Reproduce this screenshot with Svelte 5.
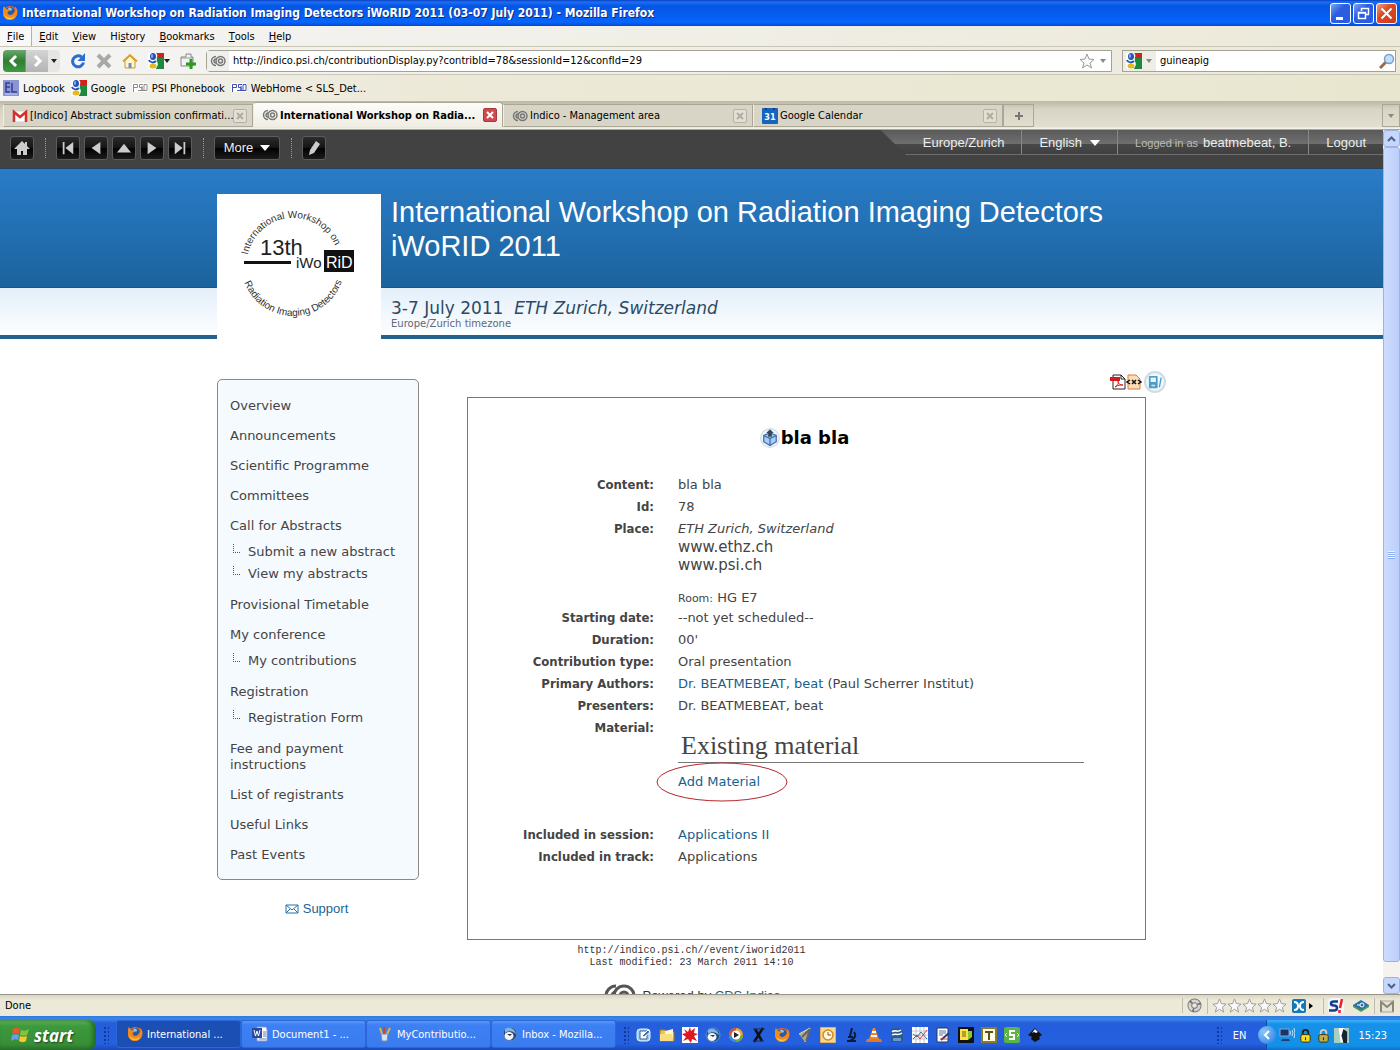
<script lang="ts">
	interface Tab {
		title: string;
		icon: string;
		active?: boolean;
	}

	interface MenuEntry {
		label: string;
		children?: string[];
	}

	const menus = ['File', 'Edit', 'View', 'History', 'Bookmarks', 'Tools', 'Help'];
	const accessKeys = [0, 0, 0, 2, 0, 0, 0];

	const bookmarks = [
		{ icon: 'el', label: 'Logbook' },
		{ icon: 'google', label: 'Google' },
		{ icon: 'psi', label: 'PSI Phonebook' },
		{ icon: 'psiblue', label: 'WebHome < SLS_Det...' }
	];

	const tabs: Tab[] = [
		{ title: '[Indico] Abstract submission confirmati...', icon: 'gmail' },
		{ title: 'International Workshop on Radia...', icon: 'indico', active: true },
		{ title: 'Indico - Management area', icon: 'indico' },
		{ title: 'Google Calendar', icon: 'calendar' }
	];

	const confMenu: MenuEntry[] = [
		{ label: 'Overview' },
		{ label: 'Announcements' },
		{ label: 'Scientific Programme' },
		{ label: 'Committees' },
		{ label: 'Call for Abstracts', children: ['Submit a new abstract', 'View my abstracts'] },
		{ label: 'Provisional Timetable' },
		{ label: 'My conference', children: ['My contributions'] },
		{ label: 'Registration', children: ['Registration Form'] },
		{ label: 'Fee and payment instructions' },
		{ label: 'List of registrants' },
		{ label: 'Useful Links' },
		{ label: 'Past Events' }
	];

	const tasks = [
		{ icon: 'firefox', label: 'International ...', active: true },
		{ icon: 'word', label: 'Document1 - ...' },
		{ icon: 'paint', label: 'MyContributio...' },
		{ icon: 'bird', label: 'Inbox - Mozilla...' }
	];

	const quickLaunch = [
		'desktop', 'folder', 'splat', 'bird', 'media', 'xwin', 'firefox', 'pens', 'clock',
		'scope', 'vlc', 'office', 'chart', 'edit', 'note', 'tbox', 'sbox', 'inkscape'
	];

	let address = $state('http://indico.psi.ch/contributionDisplay.py?contribId=78&sessionId=12&confId=29');
	let search = $state('guineapig');
</script>

{#snippet icon(name: string, size: number = 16)}
	<svg class="icon" width={size} height={size} viewBox="0 0 16 16" fill="none" aria-hidden="true">
		{#if name === 'firefox'}
			<circle cx="8" cy="8" r="7" fill="#e66a10" />
			<circle cx="8" cy="7" r="5" fill="#2b5ba8" />
			<path d="M6 3c2-1 4 0 4 2-1 1-2 0-3 1z" fill="#8fc4ee" />
			<path d="M1 4c0-2 1-3 1-3l2 3c2 0 3 1 4 2-2 0-3 1-2 3 2 2 5 1 7-3 1-2 0-4-1-5 5 3 4 9 1 12-4 4-11 2-12-4z" fill="#f08a1c" />
			<path d="M2 9c2 4 7 5 11 2-3 5-10 4-11-2z" fill="#fccb3c" />
		{:else if name === 'reload'}
			<path d="M13.500 9.500A5.500 5.500 0 1 1 11.500 4" stroke="#2a6fd0" stroke-width="3" />
			<path d="M15 0v8H7.500z" fill="#2a6fd0" />
		{:else if name === 'stop'}
			<path d="M2 2l12 12M14 2L2 14" stroke="#a9a9a9" stroke-width="4" />
		{:else if name === 'home'}
			<path d="M3 8v7h10V8L8 3z" fill="#fff6cc" stroke="#c79b3a" />
			<path d="M1 8.500L8 2l7 6.500" stroke="#e0a22e" stroke-width="2" />
			<path d="M6.500 10h3v5h-3z" fill="#6f8fc0" />
		{:else if name === 'google'}
			<path d="M8 0h8v5H8z" fill="#d2221d" />
			<path d="M9 5h7v11H8z" fill="#1b8a3c" />
			<path d="M0 0h8c3 3 0 5 0 7 3 3 2 7-1 9H0z" fill="#fff" />
			<ellipse cx="5" cy="3.500" rx="3" ry="3.500" fill="#2255b8" />
			<ellipse cx="4" cy="3" rx="1" ry="2" fill="#8eb1ee" />
			<path d="M1 7c1 3 5 3 7 1" stroke="#2255b8" stroke-width="2" />
			<ellipse cx="5" cy="13" rx="3.500" ry="2.500" fill="#e8b81c" />
		{:else if name === 'newtab'}
			<path d="M1 4h5V1h5v3h2v9H1z" fill="#f2f2f2" stroke="#888" />
			<path d="M1 5h12" stroke="#999" />
			<path d="M11 6v10M6 11h10" stroke="#2d9a20" stroke-width="3" />
		{:else if name === 'indico'}
			<g stroke="#777" stroke-width="1.500">
				<path d="M6 3.500a4.500 4.500 0 1 0 0 9" />
				<path d="M6 6a2 2 0 1 0 0 4" />
				<circle cx="10.500" cy="8" r="4.500" />
				<circle cx="10.500" cy="8" r="2" />
			</g>
		{:else if name === 'gmail'}
			<path d="M1 3h14v11H1z" fill="#fff" stroke="#cfcfcf" />
			<path d="M2 14V4l6 5 6-5v10" stroke="#d5302b" stroke-width="2.500" />
		{:else if name === 'calendar'}
			<rect width="16" height="16" rx="1" fill="#1763c0" />
			<path d="M3 1h2M11 1h2" stroke="#0b3c80" stroke-width="2" />
			<text x="8" y="12" font-size="9" font-weight="700" text-anchor="middle" fill="#fff">31</text>
		{:else if name === 'el'}
			<rect width="16" height="16" fill="#8b95d4" />
			<path d="M7 3H3v9h4M3 7h4M9 3v9h5" stroke="#323f91" stroke-width="1.500" />
			<path d="M2 14h12" stroke="#c6cbf0" />
		{:else if name === 'psi' || name === 'psiblue'}
			<rect y="3" width="16" height="9" fill="#fff" />
			<path d="M1.500 12V4.500h4v3h-4M11 4.500H7.500v3H10v3H6M10 6v4.500h5v-6h-3v6" stroke={name === 'psi' ? '#8a8a8a' : '#3c4fb4'} />
		{:else if name === 'star'}
			<path d="M8 1l2 5 5 .5-4 3.500 1.500 5L8 12l-4.500 3L5 10 1 6.500 6 6z" fill="#fafafa" stroke="#999" />
		{:else if name === 'magnifier'}
			<path d="M1 15l6-6" stroke="#9a6b4b" stroke-width="3" />
			<circle cx="10" cy="6" r="4.500" fill="#bfe0fa" stroke="#7c9cc4" stroke-width="1.500" />
		{:else if name === 'word'}
			<path d="M5 1h9l1 2v12H5z" fill="#fff" stroke="#8798c5" />
			<rect x="0" y="2" width="10" height="10" fill="#2a4b9b" />
			<path d="M2 4l1.500 6L5 5l1.500 5L8 4" stroke="#fff" />
			<path d="M11 6h3M11 8h3M11 10h3M7 13h7" stroke="#5f7fc0" />
		{:else if name === 'paint'}
			<path d="M5 15l-1-7h7l-1 7z" fill="#d9e3ef" stroke="#7d8ca4" />
			<path d="M5 8L3 2M10 8l3-6" stroke="#e3b33c" stroke-width="2" />
			<path d="M7 8V1" stroke="#d2452a" stroke-width="2" />
		{:else if name === 'bird'}
			<circle cx="8" cy="8" r="7" fill="#244b86" stroke="#5d8fce" />
			<path d="M3 3c5-3 10 0 11 5-3-3-7-4-11-1z" fill="#7fb2e8" />
			<ellipse cx="7" cy="10" rx="4.500" ry="4" fill="#f3f5f8" />
			<path d="M5 8h5l-2 2z" fill="#333" />
		{:else if name === 'desktop'}
			<rect x="1" y="2" width="13" height="12" rx="3" fill="#9fd0ef" stroke="#d9efff" />
			<path d="M4 4h7v8H4z" fill="#fff" stroke="#345f8f" />
			<path d="M6 9l6-6 2 2-6 5z" fill="#396aa8" stroke="#fff" />
		{:else if name === 'folder'}
			<path d="M1 3h5l2 2h7v9H1z" fill="#edc652" stroke="#a97b1c" />
			<path d="M6 4l8-2v9H6z" fill="#fff5cc" />
			<path d="M1 7h12l1 7H1z" fill="#f9dd7f" />
		{:else if name === 'splat'}
			<rect width="16" height="16" fill="#fff" />
			<path d="M8 0l1 4 4-3-1 5 4 1-4 2 3 5-5-2-1 4-3-4-5 2 3-4-4-3 4-1-2-4 4 3z" fill="#e01820" />
		{:else if name === 'media'}
			<circle cx="8" cy="8" r="7" fill="#f0a431" />
			<path d="M8 1a7 7 0 0 0-7 7h7z" fill="#df5030" />
			<path d="M1 8a7 7 0 0 0 7 7V8z" fill="#3e86d0" />
			<path d="M8 15a7 7 0 0 0 7-7H8z" fill="#6aac3c" />
			<circle cx="8" cy="8" r="4.500" fill="#fff" />
			<path d="M6 5l5 3-5 3z" fill="#252525" />
		{:else if name === 'xwin'}
			<path d="M4 2l7 12M12 1L3 15" stroke="#101010" stroke-width="2.500" />
			<path d="M2 2h12M2 14h11" stroke="#1c2c50" />
		{:else if name === 'pens'}
			<path d="M2 7l11-6-5 14" fill="#b5a67d" stroke="#e5dcb6" />
			<path d="M9 14l4-12M5 10l8-8" stroke="#606469" stroke-width="2" />
		{:else if name === 'clock'}
			<rect width="16" height="16" rx="1" fill="#f7d891" stroke="#cf8c35" />
			<circle cx="8" cy="8" r="5" fill="#fff7d9" stroke="#d28823" stroke-width="1.500" />
			<path d="M8 5v3h3" stroke="#8a4f12" />
		{:else if name === 'scope'}
			<path d="M9 1L7 9M11 5c3 4 0 7-4 9M4 14h9M5 10h5" stroke="#091939" stroke-width="2" />
		{:else if name === 'vlc'}
			<path d="M7 1h2l4 11H3z" fill="#ee8625" />
			<path d="M6 5h4M5 9h6" stroke="#fff" stroke-width="2" />
			<path d="M1 12h14l1 3H0z" fill="#e8771c" />
		{:else if name === 'office'}
			<path d="M2 1h9l3 3v11H2z" fill="#2a5a93" />
			<path d="M3 5c3-3 5 1 9-2M3 8c3-2 6 1 10-2" stroke="#fff" stroke-width="1.500" />
			<path d="M4 11h8v3H4z" fill="#6b9ac9" />
		{:else if name === 'chart'}
			<rect width="16" height="16" fill="#fff" />
			<path d="M0 4h16M0 8h16M0 12h16M4 0v16M8 0v16M12 0v16" stroke="#c6c6c6" />
			<path d="M1 12l4-4 3 4 7-9" stroke="#c8383c" />
			<path d="M1 7l4 3 4-5 6 7" stroke="#3e6aae" />
		{:else if name === 'edit'}
			<path d="M2 1h11v14H2z" fill="#fff" stroke="#29395e" />
			<path d="M4 4h7M4 6h7M4 8h4" stroke="#57759f" />
			<path d="M6 13l8-7" stroke="#223e6d" stroke-width="2" />
			<path d="M5 12h8" stroke="#cf4337" />
		{:else if name === 'note'}
			<rect width="16" height="16" fill="#111" />
			<path d="M2 2h8v11H2z" fill="#ffe04b" />
			<path d="M4 5h4M4 7h4M4 9h4" stroke="#705a00" />
			<path d="M10 4h4v6l-4 3z" fill="#85c927" />
		{:else if name === 'tbox'}
			<rect width="16" height="16" fill="#8a7a2c" />
			<rect x="2" y="2" width="12" height="12" fill="#fffbe2" />
			<path d="M4 5h8M8 5v8" stroke="#5c5018" stroke-width="2" />
		{:else if name === 'sbox'}
			<rect width="16" height="16" rx="2" fill="#5cb346" />
			<path d="M11 4H6v4h4v4H5" stroke="#fff" stroke-width="2" />
			<path d="M3 6L1 8l2 2M13 6l2 2-2 2" stroke="#dff2d8" />
		{:else if name === 'inkscape'}
			<path d="M8 1l7 7-3 2 1 2-5 3-4-3 1-2-4-2z" fill="#101010" />
			<path d="M8 2l3 3-2 1-2-1-2 1z" fill="#f4f4f4" />
		{:else if name === 'recycle'}
			<circle cx="8" cy="8" r="5" stroke="#777" stroke-width="5" />
			<circle cx="8" cy="8" r="5" stroke="#d4d4d4" stroke-width="3" stroke-dasharray="8 2" />
		{:else if name === 'xmarks'}
			<rect x="1" y="1" width="14" height="14" rx="2" fill="#1577b5" />
			<path d="M3 4c3 0 4 2 4 4s-1 4-4 4M13 4c-3 0-4 2-4 4s1 4 4 4" stroke="#fff" stroke-width="2" />
			<path d="M6 8h4" stroke="#fff" stroke-width="2" />
		{:else if name === 'snag'}
			<rect width="16" height="16" rx="4" fill="#f3f6fa" />
			<path d="M10 3.500H6c-4 0-4 4 0 4s4 5 0 5H1" stroke="#183d8c" stroke-width="2.500" />
			<path d="M14 1l-2 9M11.500 12v3" stroke="#e22" stroke-width="2.500" />
		{:else if name === 'diamond'}
			<path d="M0 9l8 5 8-5V7H0z" fill="#4f9a54" />
			<path d="M8 2l8 5-8 5-8-5z" fill="#2c70a8" />
			<circle cx="9" cy="7" r="2" stroke="#fff" />
			<path d="M4 7h3" stroke="#fff" />
		{:else if name === 'mail'}
			<path d="M1 3h14v11H1z" fill="#e5e2d6" />
			<path d="M2 14V4l6 5 6-5v10" stroke="#8a8776" stroke-width="2" />
			<path d="M1 3h14M1 14h14" stroke="#aaa795" />
		{:else if name === 'network'}
			<rect x="1" y="2" width="9" height="7" fill="#17356e" stroke="#8da5c6" />
			<path d="M3 12h7l1 2H2z" fill="#253d68" />
			<path d="M11 4q1 2 0 4M13 3q2 3 0 6M15 1q2 5 0 10" stroke="#bde2ff" />
		{:else if name === 'key' || name === 'lock'}
			<path d="M5 8V5a3 3 0 0 1 6 0v3" stroke={name === 'key' ? '#222' : '#ccc'} stroke-width="2" />
			<rect x="3" y="7" width="10" height="8" rx="2" fill={name === 'key' ? '#f3da24' : '#c4ac44'} stroke="#39320b" />
			<path d="M8 10v3" stroke="#221d06" />
		{:else if name === 'cat'}
			<rect width="16" height="16" fill="#a9cfbf" />
			<path d="M5 0h6v8l4 7H7z" fill="#fff" />
			<path d="M10 1l4 3v12h-4L8 8z" fill="#152332" />
		{:else if name === 'pdf'}
			<path d="M3 1h8l4 4v10H3z" fill="#fff" stroke="#222" />
			<path d="M11 1v4h4" stroke="#222" />
			<path d="M0 3h10v4H0z" fill="#d21c1c" />
			<path d="M5 13c3-2 4-4 3-6 0 3 2 4 5 4-3 0-5 0-8 2z" stroke="#d22" />
		{:else if name === 'xml'}
			<path d="M2 1h8l4 4v10H2z" fill="#fcdcb9" stroke="#e07b38" />
			<path d="M4 6L1 8l3 2M12 6l3 2-3 2" stroke="#111" stroke-width="1.500" />
			<path d="M6 6l4 4M10 6l-4 4" stroke="#111" stroke-width="1.500" />
		{:else if name === 'pda'}
			<rect x="1" y="1" width="10" height="14" rx="1" fill="#4e9dc9" />
			<path d="M3 3h6v5H3z" fill="#e9f5fc" />
			<path d="M4 11h4v2H4z" fill="#c4e1f0" />
			<path d="M15 3l-2 11" stroke="#4e9dc9" stroke-width="1.500" />
		{:else if name === 'box'}
			<circle cx="8" cy="8" r="7.500" fill="#eef4f9" stroke="#d4dee7" />
			<path d="M8 4l5 2v5l-5 3-5-3V6z" fill="#a9cdf0" stroke="#3e6da8" />
			<path d="M3 6l5 2.500L13 6M8 8.500V14" stroke="#3e6da8" />
			<path d="M8 1l3 3H9.500v3h-3V4H5z" fill="#34495f" />
		{:else if name === 'envelope'}
			<path d="M2 4h12v8H2zM2 4l6 5 6-5M2 12l4-4M14 12l-4-4" stroke="#2573a7" />
		{:else if name === 'house'}
			<path d="M8 1L0 9h3v6h4v-4h2v4h4V9h3l-3-3V2h-2v2z" fill="#ccc" />
		{:else if name === 'first'}
			<path d="M2 1h2v14H2zM14 1v14L5 8z" fill="#ccc" />
		{:else if name === 'prev'}
			<path d="M13 1v14L3 8z" fill="#ccc" />
		{:else if name === 'up'}
			<path d="M8 3l8 10H0z" fill="#ccc" />
		{:else if name === 'next'}
			<path d="M3 1v14l10-7z" fill="#ccc" />
		{:else if name === 'last'}
			<path d="M12 1h2v14h-2zM2 1v14l9-7z" fill="#ccc" />
		{:else if name === 'pencil'}
			<path d="M3 15l1-5 6-9 4 3-6 9z" fill="#ccc" />
		{/if}
	</svg>
{/snippet}

<div class="desktop">
	<header class="title-bar">
		{@render icon('firefox')}
		<span class="window-title"
			>International Workshop on Radiation Imaging Detectors iWoRID 2011 (03-07 July 2011) - Mozilla
			Firefox</span
		>
		<button class="win-button" aria-label="Minimize">
			<svg width="19" height="19" viewBox="0 0 19 19"><path d="M5 13h7v3H5z" fill="#fff" /></svg>
		</button>
		<button class="win-button" aria-label="Restore">
			<svg width="19" height="19" viewBox="0 0 19 19" fill="none" stroke="#fff">
				<path d="M7.500 7V4.500h7v6H12" stroke-width="1.500" />
				<path d="M4.500 8.500h7v6h-7zM4 9h8" stroke-width="1.500" />
			</svg>
		</button>
		<button class="win-button close" aria-label="Close">
			<svg width="19" height="19" viewBox="0 0 19 19" stroke="#fff" stroke-width="2">
				<path d="M4.500 4.500l10 10M14.500 4.500l-10 10" />
			</svg>
		</button>
	</header>

	<nav class="menu-bar">
		{#each menus as menu, i}
			{@const k = accessKeys[i]}
			<button class:first={i === 0}>{menu.slice(0, k)}<u>{menu[k]}</u>{menu.slice(k + 1)}</button>
		{/each}
	</nav>

	<div class="nav-bar">
		<div class="history-buttons">
			<button class="back" aria-label="Back">
				<svg width="22" height="22" viewBox="0 0 22 22" fill="none" stroke="#fff" stroke-width="3"><path d="M13 6l-5 5 5 5" /></svg>
			</button>
			<button class="forward" aria-label="Forward">
				<svg width="22" height="22" viewBox="0 0 22 22" fill="none" stroke="#fff" stroke-width="3"><path d="M9 6l5 5-5 5" /></svg>
			</button>
			<button class="history-drop" aria-label="Recent pages"><span class="arrow"></span></button>
		</div>
		<button aria-label="Reload">{@render icon('reload')}</button>
		<button aria-label="Stop">{@render icon('stop')}</button>
		<button aria-label="Home">{@render icon('home')}</button>
		<button aria-label="Google">{@render icon('google')}<span class="arrow"></span></button>
		<button aria-label="New tab">{@render icon('newtab')}</button>
		<div class="field address">
			<span class="identity">{@render icon('indico')}</span>
			<input type="text" aria-label="Location" bind:value={address} />
			<button aria-label="Bookmark this page">{@render icon('star')}</button>
			<button class="address-drop" aria-label="Show history"><span class="arrow grey"></span></button>
		</div>
		<div class="field search">
			<button class="engine" aria-label="Search engine">{@render icon('google')}<span class="arrow grey"></span></button>
			<input type="text" aria-label="Search" bind:value={search} />
			<button aria-label="Go">{@render icon('magnifier')}</button>
		</div>
	</div>

	<nav class="bookmark-bar">
		{#each bookmarks as bookmark}
			<a href="#{bookmark.label}">{@render icon(bookmark.icon)}{bookmark.label}</a>
		{/each}
	</nav>

	<div class="tab-bar">
		{#each tabs as tab}
			<div class="tab" class:active={tab.active}>
				{@render icon(tab.icon)}
				<span class="tab-title">{tab.title}</span>
				<button class="tab-close" aria-label="Close tab">
					<svg width="8" height="8" viewBox="0 0 8 8"><path d="M1 1l6 6M7 1L1 7" stroke="currentColor" stroke-width="2" /></svg>
				</button>
			</div>
		{/each}
		<button class="new-tab" aria-label="Open a new tab">
			<svg width="10" height="10" viewBox="0 0 10 10"><path d="M5 1v8M1 5h8" stroke="#777" stroke-width="2" /></svg>
		</button>
		<button class="all-tabs" aria-label="List all tabs"><span class="arrow grey"></span></button>
	</div>

	<div class="viewport">
		<div class="page">
			<div class="session-bar">
				<div class="session-tools">
					<button class="dark" aria-label="Home">{@render icon('house')}</button>
					<span class="dots"></span>
					<div class="pager">
						<button class="dark" aria-label="First">{@render icon('first', 14)}</button>
						<button class="dark" aria-label="Previous">{@render icon('prev', 14)}</button>
						<button class="dark" aria-label="Up">{@render icon('up', 14)}</button>
						<button class="dark" aria-label="Next">{@render icon('next', 14)}</button>
						<button class="dark" aria-label="Last">{@render icon('last', 14)}</button>
					</div>
					<span class="dots"></span>
					<button class="dark more">More <span class="caret"></span></button>
					<span class="dots"></span>
					<button class="dark" aria-label="Edit">{@render icon('pencil')}</button>
				</div>
				<div class="session-user">
					<a href="#timezone" class="zone">Europe/Zurich</a>
					<a href="#language">English <span class="caret"></span></a>
					<span class="user"><small>Logged in as</small> beatmebeat, B.</span>
					<a href="#logout">Logout</a>
				</div>
			</div>

			<header class="conf-header">
				<div class="container header-grid">
					<svg class="logo" width="164" height="145" viewBox="0 0 164 145" role="img" aria-label="13th iWoRiD">
						<defs>
							<path id="arc-top" d="M30 70A46 46 0 0 1 122 70" />
							<path id="arc-bottom" d="M24 70A52 52 0 0 0 128 70" />
						</defs>
						<rect width="164" height="145" fill="#fff" />
						<text font-size="10" fill="#333"><textPath href="#arc-top" startOffset="9">International Workshop on</textPath></text>
						<text font-size="10" fill="#333"><textPath href="#arc-bottom" startOffset="19">Radiation Imaging Detectors</textPath></text>
						<text x="43" y="61" font-size="22" fill="#222">13th</text>
						<rect x="27" y="67" width="47" height="3" fill="#111" />
						<text x="79" y="74" font-size="15" fill="#222">iWo</text>
						<rect x="107" y="56" width="30" height="22" fill="#111" />
						<text x="109" y="74" font-size="16" fill="#fff">RiD</text>
					</svg>
					<div class="header-text">
						<h1>International Workshop on Radiation Imaging Detectors iWoRID 2011</h1>
						<div class="when">3-7 July 2011 &nbsp;<i>ETH Zurich, Switzerland</i></div>
						<div class="timezone">Europe/Zurich timezone</div>
					</div>
				</div>
			</header>

			<div class="container body-grid">
				<aside>
					<ul class="conf-menu">
						{#each confMenu as entry}
							<li>
								<a href="#{entry.label}">{entry.label}</a>
								{#if entry.children}
									<ul class="sub-menu">
										{#each entry.children as child}
											<li><span class="branch"></span><a href="#{child}">{child}</a></li>
										{/each}
									</ul>
								{/if}
							</li>
						{/each}
					</ul>
					<a class="support" href="#support">{@render icon('envelope')}Support</a>
				</aside>

				<main>
					<div class="export-icons">
						<a href="#pdf" aria-label="PDF">{@render icon('pdf')}</a>
						<a href="#xml" aria-label="XML">{@render icon('xml')}</a>
						<a href="#mobile" class="round" aria-label="Mobile">{@render icon('pda', 14)}</a>
					</div>
					<section class="contribution">
						<h2>{@render icon('box', 20)}bla bla</h2>
						<table>
							<tbody>
								<tr><th>Content:</th><td>bla bla</td></tr>
								<tr><th>Id:</th><td>78</td></tr>
								<tr>
									<th>Place:</th>
									<td class="place">
										<i>ETH Zurich, Switzerland</i>
										<span class="large">www.ethz.ch</span>
										<span class="large">www.psi.ch</span>
										<span class="room"><small>Room:</small> HG E7</span>
									</td>
								</tr>
								<tr><th>Starting date:</th><td>--not yet scheduled--</td></tr>
								<tr><th>Duration:</th><td>00'</td></tr>
								<tr><th>Contribution type:</th><td>Oral presentation</td></tr>
								<tr><th>Primary Authors:</th><td><a href="#author">Dr. BEATMEBEAT, beat</a> (Paul Scherrer Institut)</td></tr>
								<tr><th>Presenters:</th><td>Dr. BEATMEBEAT, beat</td></tr>
								<tr>
									<th>Material:</th>
									<td class="material">
										<h3>Existing material</h3>
										<a class="add-material" href="#material">Add Material
											<svg class="marker" width="132" height="40" viewBox="0 0 132 40" aria-hidden="true">
												<ellipse cx="66" cy="20" rx="65" ry="19" fill="none" stroke="#b8262c" />
											</svg>
										</a>
									</td>
								</tr>
								<tr><th>Included in session:</th><td><a href="#session">Applications II</a></td></tr>
								<tr><th>Included in track:</th><td>Applications</td></tr>
							</tbody>
						</table>
					</section>
				</main>
			</div>

			<footer>
				<div>http://indico.psi.ch//event/iworid2011</div>
				<div>Last modified: 23 March 2011 14:10</div>
				<div class="powered">
					<svg width="34" height="24" viewBox="0 0 34 24" fill="none" stroke="#555" stroke-width="3" aria-hidden="true">
						<path d="M14 2A10 10 0 1 0 14 22M14 8a4 4 0 1 0 0 8" />
						<circle cx="22" cy="12" r="10" />
						<circle cx="22" cy="12" r="4" />
					</svg>
					<span>Powered by <a href="#indico">CDS Indico</a></span>
				</div>
			</footer>
		</div>

		<div class="scrollbar">
			<button aria-label="Scroll up"><svg width="9" height="6" viewBox="0 0 9 6"><path d="M1 5l3.500-3.500L8 5" /></svg></button>
			<div class="thumb"><span class="thumb-grip"></span></div>
			<button aria-label="Scroll down"><svg width="9" height="6" viewBox="0 0 9 6"><path d="M1 1l3.500 3.500L8 1" /></svg></button>
		</div>
	</div>

	<div class="status-bar">
		<span class="status-text">Done</span>
		<span class="panel">{@render icon('recycle', 15)}</span>
		<span class="panel rating">
			{#each Array(5) as _}
				{@render icon('star', 15)}
			{/each}
			<span class="xmarks">{@render icon('xmarks')}</span>
			<span class="side-arrow"></span>
		</span>
		<span class="panel">{@render icon('snag')}</span>
		<span class="panel plain">{@render icon('diamond')}</span>
		<span class="panel">{@render icon('mail')}</span>
	</div>

	<div class="task-bar">
		<button class="start">
			<svg width="20" height="18" viewBox="0 0 20 18" aria-hidden="true">
				<path d="M2 3c3-2 5-1 7 0L8 8C6 7 4 7 1 8z" fill="#e85a2a" />
				<path d="M10 4c3 1 5 1 8-1l-2 6c-2 1-5 1-7 0z" fill="#86c440" />
				<path d="M1 9c3-1 5-1 7 0l-1 5c-2-1-4-1-7 1z" fill="#6a9ff0" />
				<path d="M9 10c2 1 5 1 7 0l-1 5c-3 2-5 1-7 0z" fill="#f8c832" />
			</svg>
			start
		</button>
		<span class="grip"></span>
		<div class="tasks">
			{#each tasks as task}
				<button class:active={task.active}>{@render icon(task.icon)}<span>{task.label}</span></button>
			{/each}
		</div>
		<span class="grip"></span>
		<div class="quick-launch">
			{#each quickLaunch as name}
				<button aria-label={name}>{@render icon(name)}</button>
			{/each}
		</div>
		<span class="grip"></span>
		<span class="lang">EN</span>
		<div class="tray">
			<button class="expand" aria-label="Show hidden icons">
				<svg width="8" height="10" viewBox="0 0 8 10" fill="none" stroke="#fff" stroke-width="2"><path d="M6 1L2 5l4 4" /></svg>
			</button>
			{@render icon('network')}
			{@render icon('key', 15)}
			{@render icon('lock', 15)}
			{@render icon('cat', 15)}
			<time>15:23</time>
		</div>
	</div>
</div>

<style>
	:global(body) {
		margin: 0;
		background: #fff;
	}

	.desktop {
		display: flex;
		flex-direction: column;
		height: 100vh;
		overflow: hidden;
		font-family: 'DejaVu Sans Condensed', 'Noto Sans', sans-serif;
		font-size: 11px;
		color: #000;
	}

	button,
	input {
		font: inherit;
		color: inherit;
		margin: 0;
		padding: 0;
		border: none;
		background: none;
	}

	button {
		display: flex;
		align-items: center;
		justify-content: center;
		cursor: pointer;
	}

	a {
		color: inherit;
		text-decoration: none;
	}

	svg {
		flex-shrink: 0;
	}

	.arrow {
		border: 3px solid transparent;
		border-top: 4px solid #222;
		border-bottom: none;
	}

	.arrow.grey {
		border-top-color: #888;
	}

	.caret {
		display: inline-block;
		border: 5px solid transparent;
		border-top: 6px solid #fff;
		border-bottom: none;
	}

	/* Window frame */
	.title-bar {
		display: flex;
		align-items: center;
		gap: 2px;
		height: 26px;
		flex-shrink: 0;
		padding: 0 3px 0 2px;
		background: linear-gradient(#0a3fc0, #1c6ff6 2px, #0456e4 6px, #0560f4 18px, #0866fc 22px, #0348d4);
		color: #fff;
	}

	.window-title {
		flex: 1;
		padding-left: 2px;
		font-size: 12px;
		font-weight: 700;
		text-shadow: 1px 1px #0a2a80;
		white-space: nowrap;
		overflow: hidden;
	}

	.win-button {
		width: 21px;
		height: 21px;
		border: 1px solid #fff;
		border-radius: 3px;
		background: linear-gradient(135deg, #7fa4f4, #2c5ee0 40%, #2a5be4);
	}

	.win-button.close {
		background: linear-gradient(135deg, #f0a088, #dc4a24 40%, #c83c18);
	}

	.menu-bar {
		display: flex;
		height: 21px;
		flex-shrink: 0;
		background: linear-gradient(90deg, #f4f4f4, #ece9d8);
		border-bottom: 1px solid #c9c6b8;
		box-sizing: border-box;
	}

	.menu-bar button {
		padding: 0 7px;
	}

	.menu-bar .first {
		border-right: 1px solid #b5b2a4;
		background: #f8f8f6;
	}

	.nav-bar {
		display: flex;
		align-items: center;
		gap: 10px;
		height: 28px;
		flex-shrink: 0;
		padding: 0 4px 0 3px;
		background: linear-gradient(90deg, #f4f4f4, #ece9d8);
		border-bottom: 1px solid #c9c6b8;
		box-sizing: border-box;
	}

	.history-buttons {
		display: flex;
		border-radius: 4px;
		overflow: hidden;
	}

	.back {
		background: linear-gradient(#6aa86a, #2f7d33 50%, #3f9942);
	}

	.forward {
		background: linear-gradient(#d4d4d4, #b4b4b4);
		border-left: 1px solid #8c8c8c;
	}

	.history-drop {
		width: 12px;
		background: #e6e6e4;
	}

	.field {
		display: flex;
		align-items: center;
		height: 22px;
		box-sizing: border-box;
		border: 1px solid #a5a294;
		background: #fff;
	}

	.field input {
		flex: 1;
		min-width: 0;
		padding: 0 4px;
		outline: none;
	}

	.address {
		flex: 1;
		border-radius: 4px 0 0 4px;
	}

	.identity {
		display: flex;
		align-items: center;
		padding: 0 3px;
		height: 100%;
		background: #efefec;
	}

	.address-drop {
		width: 16px;
	}

	.search {
		width: 274px;
	}

	.engine {
		gap: 4px;
		height: 100%;
		padding: 0 4px 0 3px;
		background: #efeee6;
	}

	.bookmark-bar {
		display: flex;
		align-items: center;
		gap: 6px;
		height: 26px;
		flex-shrink: 0;
		padding: 0 3px;
		background: linear-gradient(90deg, #f4f4f4, #ece9d8 30%, #e9e6d0);
	}

	.bookmark-bar a {
		display: flex;
		align-items: center;
		gap: 4px;
	}

	.tab-bar {
		display: flex;
		align-items: flex-end;
		height: 29px;
		flex-shrink: 0;
		box-sizing: border-box;
		padding: 0 0 2px 3px;
		background: linear-gradient(#bcb8a8, #d8d4c4 8px, #e2dfd0 26px, #f4f2e8 27px);
		border-bottom: 1px solid #a9a699;
	}

	.tab {
		display: flex;
		align-items: center;
		gap: 2px;
		width: 250px;
		height: 23px;
		box-sizing: border-box;
		padding: 0 5px 0 8px;
		border: 1px solid #aaa797;
		border-left-color: #f0eee4;
		background: #d8d5c6;
	}

	.tab.active {
		height: 25px;
		border-bottom: none;
		border-radius: 3px 3px 0 0;
		background: linear-gradient(#fcfcfa, #efede2);
		font-weight: 700;
	}

	.tab-title {
		flex: 1;
		min-width: 0;
		white-space: nowrap;
	}

	.tab-close {
		width: 14px;
		height: 14px;
		border: 1px solid #b5b2a4;
		border-radius: 2px;
		color: #b0ada0;
		background: #e2e0d4;
	}

	.active .tab-close {
		border-color: #a8383c;
		background: #cf4a50;
		color: #fff;
	}

	.new-tab {
		width: 31px;
		height: 23px;
		border: 1px solid #aaa797;
	}

	.all-tabs {
		width: 18px;
		height: 23px;
		margin-left: auto;
		border: 1px solid #aaa797;
	}

	/* Page */
	.viewport {
		display: flex;
		flex: 1;
		min-height: 0;
	}

	.page {
		flex: 1;
		min-width: 0;
		overflow: hidden;
		font-family: Verdana, 'DejaVu Sans', sans-serif;
		font-size: 13px;
		line-height: 16px;
		color: #444;
	}

	.container {
		max-width: 949px;
		margin: 0 auto;
	}

	.session-bar {
		display: flex;
		justify-content: space-between;
		height: 39px;
		box-sizing: border-box;
		border-bottom: 1px solid #24415f;
		background: #424242;
		font-family: 'Liberation Sans', sans-serif;
		color: #eee;
	}

	.session-tools {
		display: flex;
		align-items: center;
		gap: 10px;
		padding: 0 10px 2px;
	}

	.pager {
		display: flex;
		gap: 4px;
	}

	.dark {
		width: 24px;
		height: 24px;
		border: 1px solid #5c5c5c;
		border-radius: 3px;
		background: linear-gradient(#2c2c2c, #141414 50%, #000 50%, #1c1c1c);
	}

	.more {
		width: 66px;
		gap: 7px;
	}

	.dots {
		width: 1px;
		height: 20px;
		border-right: 1px dotted #999;
	}

	.session-user {
		display: flex;
		height: 25px;
		box-sizing: border-box;
		padding-left: 25px;
		border-bottom: 1px solid #6e6e6e;
		background: linear-gradient(#5a5a5a, #707070 60%, #484848 60%, #404040);
		clip-path: polygon(0 0, 100% 0, 100% 100%, 25px 100%);
	}

	.session-user a,
	.user {
		display: flex;
		align-items: center;
		gap: 8px;
		padding: 1px 17px 0;
		border-left: 1px solid #888;
	}

	.session-user .zone {
		border-left: none;
	}

	.user {
		gap: 5px;
	}

	.user small {
		font-size: 11px;
		color: #bbb;
	}

	.conf-header {
		height: 166px;
		border-bottom: 4px solid #24618f;
		background: linear-gradient(#2a7cc8, #1b639d 118px, #154a78 119px, #e4effa 119px, #fcfeff);
	}

	.header-grid {
		display: flex;
		gap: 10px;
		padding-top: 25px;
	}

	.logo {
		font-family: 'Liberation Sans', sans-serif;
	}

	h1 {
		max-width: 740px;
		margin: 1px 0 35px;
		font: 29px/34px 'Liberation Sans', sans-serif;
		color: #fff;
	}

	.when {
		font-size: 17px;
		line-height: 20px;
		color: #2c4a66;
	}

	.timezone {
		font-size: 10px;
		line-height: 12px;
		color: #667;
	}

	.body-grid {
		display: grid;
		grid-template-columns: 202px 1fr;
		column-gap: 48px;
		padding-top: 30px;
	}

	.conf-menu {
		display: flex;
		flex-direction: column;
		gap: 14px;
		margin: 10px 0 21px;
		padding: 18px 12px 16px;
		border: 1px solid #888;
		border-radius: 5px;
		background: #f5faff;
		list-style: none;
	}

	.sub-menu {
		display: flex;
		flex-direction: column;
		gap: 6px;
		margin: 10px 0 1px;
		padding: 0 0 0 3px;
		list-style: none;
	}

	.sub-menu li {
		display: flex;
		gap: 8px;
	}

	.branch {
		width: 6px;
		height: 8px;
		border-left: 1px dotted #555;
		border-bottom: 1px dotted #555;
	}

	.support {
		display: flex;
		justify-content: center;
		gap: 3px;
		padding-right: 4px;
		font-family: 'Liberation Sans', sans-serif;
		color: #1a6496;
	}

	.export-icons {
		display: flex;
		align-items: center;
		justify-content: flex-end;
		height: 26px;
		padding-bottom: 2px;
	}

	.export-icons a {
		display: flex;
	}

	.export-icons .round {
		padding: 2px;
		margin-left: 2px;
		border: 2px solid #cfdde2;
		border-radius: 50%;
		background: #f0f7fa;
	}

	.contribution {
		margin-right: 20px;
		min-height: 541px;
		border: 1px solid #777;
	}

	h2 {
		display: flex;
		align-items: center;
		justify-content: center;
		gap: 1px;
		margin: 28px 4px 25px 0;
		font-size: 18px;
		line-height: 24px;
		color: #000;
	}

	table {
		width: 100%;
		border-collapse: collapse;
	}

	th {
		width: 186px;
		padding: 2px 0 4px;
		text-align: right;
		vertical-align: top;
		font-family: 'DejaVu Sans Condensed', sans-serif;
		font-size: 13px;
		white-space: nowrap;
	}

	td {
		padding: 2px 61px 4px 24px;
		vertical-align: top;
	}

	td a,
	footer a {
		color: #1a5f8c;
	}

	.place {
		padding-top: 1px;
		padding-bottom: 1px;
	}

	.place > * {
		display: block;
		line-height: 18px;
	}

	.place .large {
		font-size: 15px;
	}

	.place .room {
		margin-top: 16px;
		line-height: 16px;
	}

	.room small {
		font-size: 11px;
	}

	.material {
		padding-bottom: 35px;
	}

	h3 {
		margin: 11px 0;
		padding: 0 3px 1px;
		border-bottom: 1px solid #777;
		font: 26px/30px 'Liberation Serif', serif;
	}

	.add-material {
		position: relative;
	}

	.marker {
		position: absolute;
		top: -12px;
		left: -22px;
	}

	footer {
		margin-top: 5px;
		font: 10px/12px 'Liberation Mono', monospace;
		text-align: center;
		color: #333;
	}

	.powered {
		display: flex;
		align-items: center;
		justify-content: center;
		gap: 6px;
		margin-top: 15px;
		font: 13px/16px 'Liberation Sans', sans-serif;
	}

	.scrollbar {
		display: flex;
		flex-direction: column;
		width: 17px;
		background: #f4f3ee;
	}

	.scrollbar button {
		height: 17px;
		border: 1px solid #9cb4e4;
		border-radius: 3px;
		background: #c6d6fc;
	}

	.scrollbar path {
		fill: none;
		stroke: #4d6185;
		stroke-width: 2;
	}

	.thumb {
		display: flex;
		align-items: center;
		justify-content: center;
		flex: 1;
		margin-bottom: 15px;
		border: 1px solid #9cb4e4;
		border-radius: 3px;
		background: linear-gradient(90deg, #cddcfe, #bccffa);
	}

	.thumb-grip {
		width: 7px;
		height: 8px;
		background: repeating-linear-gradient(#eef4fe 0 1px, #8cb0f8 1px 2px);
	}

	/* Status bar and task bar */
	.status-bar {
		display: flex;
		align-items: center;
		height: 22px;
		flex-shrink: 0;
		box-sizing: border-box;
		border-top: 1px solid #999688;
		background: linear-gradient(#d8d5c4, #ece9d8 5px);
	}

	.status-text {
		flex: 1;
		padding-left: 5px;
	}

	.panel {
		display: flex;
		align-items: center;
		padding: 0 5px 0 4px;
		border-left: 1px solid #c0bdad;
	}

	.panel.plain {
		border-left: none;
	}

	.rating {
		padding-right: 10px;
	}

	.xmarks {
		display: flex;
		margin: 0 2px 0 4px;
	}

	.side-arrow {
		border: 3px solid transparent;
		border-left: 4px solid #000;
		border-right: none;
	}

	.task-bar {
		display: flex;
		align-items: stretch;
		height: 34px;
		flex-shrink: 0;
		box-sizing: border-box;
		padding-top: 4px;
		background: linear-gradient(#2f7adf, #3b86e8 3px, #245edb 7px, #2460e0 28px, #1b48b4);
		color: #fff;
	}

	.start {
		justify-content: flex-start;
		gap: 3px;
		width: 96px;
		padding-left: 11px;
		border-radius: 0 8px 8px 0;
		background: linear-gradient(#6cb868, #3c9a3c 6px, #388e38 24px, #2c742c);
		box-shadow: inset -3px 0 4px #1f6a24;
		font: italic 700 17px 'Open Sans', sans-serif;
		text-shadow: 1px 1px 2px #144a18;
	}

	.grip {
		width: 6px;
		margin: 6px 7px;
		background: radial-gradient(circle, #123a94 1px, transparent 1px) 0 0 / 4px 4px;
	}

	.tasks {
		display: flex;
	}

	.tasks button {
		justify-content: flex-start;
		gap: 4px;
		width: 125px;
		margin-bottom: 2px;
		padding: 0 10px;
		border: 1px solid #2c66d8;
		border-radius: 3px;
		background: linear-gradient(#5a98fa, #3c80f4 4px, #3a7cf0);
		white-space: nowrap;
	}

	.tasks .active {
		background: #1c4fb4;
	}

	.quick-launch {
		display: flex;
		flex: 1;
		gap: 7px;
	}

	.lang {
		align-self: center;
		padding: 0 20px 0 4px;
	}

	.tray {
		display: flex;
		align-items: center;
		gap: 3px;
		padding-right: 13px;
		border-left: 1px solid #0f4cac;
		background: linear-gradient(#3cb4f8, #1790ea 4px, #1290e8 26px, #0f70c8);
	}

	.expand {
		width: 18px;
		height: 18px;
		margin-left: -9px;
		border-radius: 50%;
		background: radial-gradient(circle at 6px 6px, #8cc8fc, #2078e0);
	}

	time {
		margin-left: 6px;
	}
</style>
